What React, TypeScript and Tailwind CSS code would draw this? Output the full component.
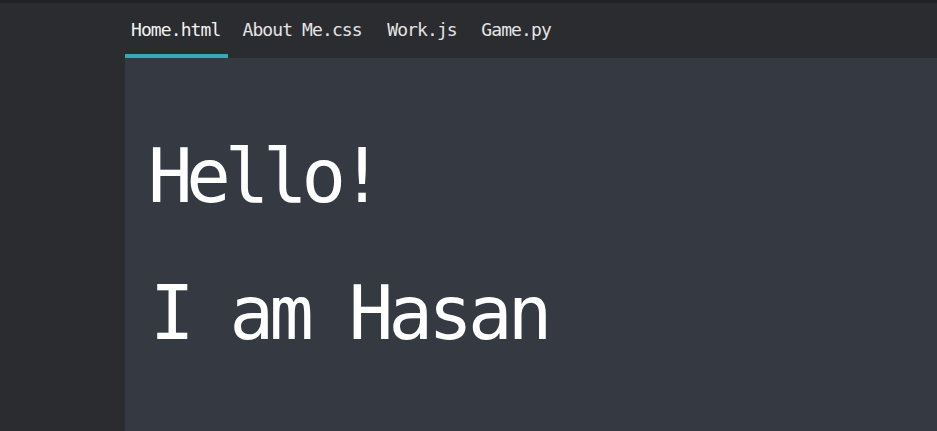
import React from "react";

const mono = { fontFamily: '"DejaVu Sans Mono", monospace' };

export default function App() {
  const tabs = [
    { name: "Home.html", active: true, cls: "pl-[6px] w-[103px]" },
    { name: "About Me.css", active: false, cls: "pl-[14.5px]" },
    { name: "Work.js", active: false, cls: "pl-[25.5px]" },
    { name: "Game.py", active: false, cls: "pl-[24.5px]" },
  ];
  return (
    <div
      className="w-[937px] h-[431px] overflow-hidden bg-[#2b2c30] flex flex-col font-['DejaVu_Sans_Mono',monospace]"
      style={mono}
    >
      <div className="h-[3px] bg-[#222224] shrink-0" />
      <div className="flex flex-1 min-h-0">
        <div className="w-[125px] shrink-0 bg-[#2b2c30]" />
        <div className="flex-1 flex flex-col min-w-0">
          <div className="h-[55px] flex shrink-0 bg-[#2b2c30]">
            {tabs.map((t) => (
              <div
                key={t.name}
                className={`h-[55px] box-border pt-[18px] text-[18px] leading-[18px] tracking-[-0.9px] whitespace-pre ${t.cls} ${
                  t.active
                    ? "border-b-4 border-[#34aab2] text-[#f2f2f2]"
                    : "text-[#e4e4e4]"
                }`}
              >
                {t.name}
              </div>
            ))}
          </div>
          <div className="flex-1 bg-[#353a42] pl-[23px] pt-[81px] text-white">
            <div className="text-[74px] leading-[74px] tracking-[-6.2px] whitespace-pre">
              Hello!
            </div>
            <div className="mt-[63px] ml-[2px] text-[74px] leading-[74px] tracking-[-4.8px] whitespace-pre">
              I am Hasan
            </div>
          </div>
        </div>
      </div>
    </div>
  );
}
